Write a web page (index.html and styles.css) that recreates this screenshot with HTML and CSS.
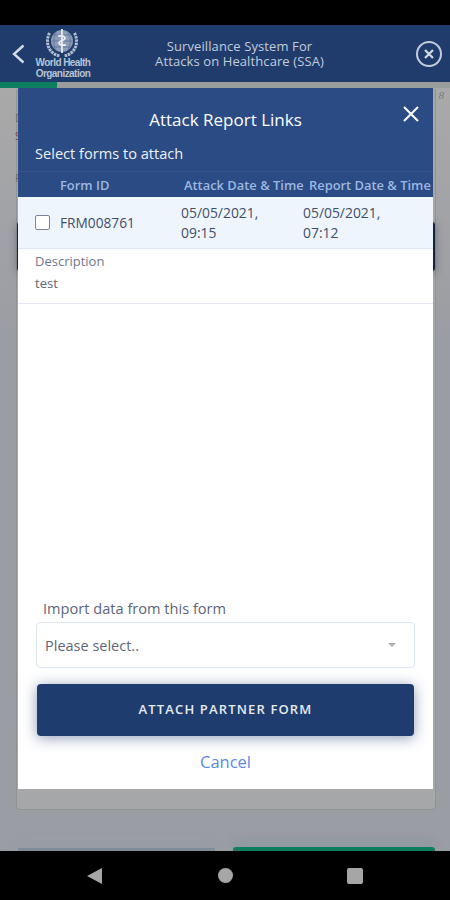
FILE: index.html
```html
<!DOCTYPE html>
<html>
<head>
<meta charset="utf-8">
<title>Attack Report Links</title>
<link rel="stylesheet" href="styles.css">
</head>
<body>
<div class="screen">

<div class="statusBar"></div>

<!-- APP BAR -->
<div class="appBar">
  <svg class="backIcon" width="14" height="22" viewBox="0 0 14 22"><path d="M12.5 2.5 L3 11 L12.5 19.5" fill="none" stroke="#d5dbe6" stroke-width="2.4"/></svg>
  <div class="logo">
    <svg width="34" height="29" viewBox="0 0 34 29">
      <circle cx="17" cy="13" r="11" fill="#8e9db6"/>
      <path d="M8 7 H26 M6.5 13 H27.5 M8 19 H26 M17 2 V24 M11 4 C8 10 8 17 11 22 M23 4 C26 10 26 17 23 22" stroke="#5a7299" stroke-width="0.8" fill="none"/>
      <path d="M17 1 V25 M13 8 C21 7 22 11 17 12.5 C12 14 13 18 21 17" stroke="#eef1f6" stroke-width="1.7" fill="none"/>
      <path d="M4.5 5 C-0.5 15 4 26 15 28 M29.5 5 C34.5 15 30 26 19 28" stroke="#b4bfd0" stroke-width="3" fill="none" stroke-dasharray="2.5 0.8"/>
    </svg>
    <div class="logoText">World Health<br>Organization</div>
  </div>
  <div class="appTitle">Surveillance System For<br>Attacks on Healthcare (SSA)</div>
  <svg class="closeIcon" width="28" height="28" viewBox="0 0 28 28"><circle cx="14" cy="14" r="12" fill="none" stroke="#c3ccdb" stroke-width="2"/><path d="M10 10 L18 18 M18 10 L10 18" stroke="#d5dbe6" stroke-width="2.2"/></svg>
</div>

<div class="progress"><div class="progressFill"></div></div>

<div class="content">

  <!-- form behind the dialog -->
  <div class="backdrop">
    <div class="pageNumber">8</div>
    <div class="backCard">
      <div class="backText">D</div>
      <div class="backText red">S</div>
      <div class="backText third">F</div>
      <div class="backButton"></div>
    </div>
    <div class="backFooter">
      <div class="footerLeft"></div>
      <div class="footerRight"></div>
    </div>
  </div>

  <!-- DIALOG -->
  <div class="dialog">
    <div class="dialogHead">
      <div class="dialogTitleRow">
        <div class="dialogTitle">Attack Report Links</div>
        <svg class="dialogClose" width="18" height="18" viewBox="0 0 18 18"><path d="M2 2 L16 16 M16 2 L2 16" stroke="#fff" stroke-width="2"/></svg>
      </div>
      <div class="dialogSub">Select forms to attach</div>
      <div class="tableHead">
        <div class="colId">Form ID</div>
        <div class="colAttack">Attack Date &amp; Time</div>
        <div class="colReport">Report Date &amp; Time</div>
      </div>
    </div>

    <div class="tableRow">
      <div class="checkBox"></div>
      <div class="rowId">FRM008761</div>
      <div class="rowAttack">05/05/2021,<br>09:15</div>
      <div class="rowReport">05/05/2021,<br>07:12</div>
    </div>
    <div class="descRow">
      <div class="descLabel">Description</div>
      <div class="descText">test</div>
    </div>

    <div class="spacer"></div>

    <div class="importLabel">Import data from this form</div>
    <div class="selectBox">
      <span>Please select..</span>
      <div class="caret"></div>
    </div>
    <div class="attachButton">ATTACH PARTNER FORM</div>
    <div class="cancel">Cancel</div>
  </div>
</div>

<!-- NAV BAR -->
<div class="navBar">
  <svg width="16" height="18" viewBox="0 0 16 18"><path d="M16 1 V17 L1 9 Z" fill="#a6a6a6"/></svg>
  <div class="navCircle"></div>
  <div class="navSquare"></div>
</div>

</div>
</body>
</html>
```

FILE: styles.css
```css
html, body
{
margin:0;
padding:0;
}

.screen
{
width:450px;
height:900px;
display:flex;
flex-direction:column;
overflow:hidden;
font-family:"Open Sans", "Noto Sans", sans-serif;
background:#000;
}

.statusBar
{
height:25px;
background:#000;
}

.appBar
{
height:57px;
background:#1f3c6c;
display:flex;
align-items:center;
position:relative;
}
.backIcon
{
margin-left:11px;
}
.logo
{
width:60px;
margin-left:8px;
display:flex;
flex-direction:column;
align-items:center;
}
.logo svg
{
margin-left:-3px;
}
.logoText
{
font-family:"Liberation Sans", sans-serif;
font-size:10px;
line-height:11px;
font-weight:bold;
letter-spacing:-0.55px;
color:#b8c2d2;
text-align:center;
white-space:nowrap;
}
.appTitle
{
flex:1;
font-size:13px;
line-height:15px;
color:#c3ccdb;
text-align:center;
letter-spacing:0.1px;
white-space:nowrap;
}
.closeIcon
{
margin:0 7px 0 29px;
}

.progress
{
height:6px;
background:#9c9c9c;
}
.progressFill
{
width:57px;
height:6px;
background:#0e7f5e;
}

.content
{
flex:1;
position:relative;
overflow:hidden;
}

/* form behind the dialog */
.backdrop
{
height:100%;
background:linear-gradient(#a9a9a9, #9b9da4 250px);
padding:0 14px 0 16px;
box-sizing:border-box;
display:flex;
flex-direction:column;
}
.pageNumber
{
height:0;
text-align:right;
margin-right:-8px;
padding-top:1px;
font-family:"Liberation Serif", serif;
font-style:italic;
font-size:11px;
color:#7d7d7d;
}
.backCard
{
height:721px;
box-sizing:border-box;
border:1px solid #929396;
border-top:none;
border-radius:0 0 4px 4px;
background:#a6a7a8;
padding-top:20px;
font-size:11px;
line-height:18px;
color:#6a6a6a;
}
.backText
{
margin-left:-2px;
}
.backText.red
{
color:#8a4545;
}
.backText.third
{
margin-top:24px;
}
.backButton
{
height:49px;
margin-top:35px;
background:#15223f;
border-radius:3px;
box-shadow:0 2px 10px rgba(21,34,63,0.35);
}
.backFooter
{
margin-top:auto;
display:flex;
gap:18px;
padding:0 1px 0 2px;
}
.footerLeft
{
width:197px;
height:3px;
margin-top:1px;
background:#7f8d99;
box-shadow:0 -4px 12px rgba(127,160,170,0.3);
}
.footerRight
{
flex:1;
height:4px;
background:#0e7f5e;
border-radius:3px 3px 0 0;
box-shadow:0 -5px 12px rgba(14,127,94,0.25);
}

/* dialog */
.dialog
{
position:absolute;
left:18px;
top:0;
width:415px;
height:701px;
background:#fff;
display:flex;
flex-direction:column;
}
.dialogHead
{
background:#2a4b84;
color:#fff;
}
.dialogTitleRow
{
height:54px;
box-sizing:border-box;
display:flex;
align-items:center;
justify-content:center;
position:relative;
}
.dialogTitle
{
font-size:17px;
margin-top:9px;
}
.dialogClose
{
position:absolute;
right:13px;
top:17px;
}
.dialogSub
{
height:29px;
padding-left:17px;
font-size:14.6px;
line-height:22px;
color:#eef1f6;
border-bottom:1px solid #315490;
}
.tableHead
{
height:25px;
display:flex;
align-items:center;
font-size:12.9px;
font-weight:600;
color:#9db7e0;
white-space:nowrap;
}
.colId
{
margin-left:42px;
width:124px;
}
.colAttack
{
width:125px;
}

.tableRow
{
height:52px;
background:#eef5fd;
border-bottom:1px solid #dfe6f2;
box-sizing:border-box;
display:flex;
align-items:center;
font-size:13.9px;
line-height:20px;
color:#3f4e69;
}
.checkBox
{
width:13px;
height:13px;
margin-left:17px;
border:1.5px solid #7b8399;
border-radius:2px;
background:#fff;
}
.rowId
{
width:121px;
margin-left:10px;
font-size:13.7px;
}
.rowAttack
{
width:122px;
}

.descRow
{
height:55px;
box-sizing:border-box;
padding:4px 17px 0;
border-bottom:1px solid #e4e7f1;
}
.descLabel
{
font-size:13px;
line-height:17px;
color:#70778a;
}
.descText
{
margin-top:5px;
font-size:13px;
line-height:17px;
color:#5c6478;
}

.spacer
{
flex:1;
}

.importLabel
{
margin-left:25px;
font-size:14.6px;
line-height:18px;
color:#5c6478;
}
.selectBox
{
height:46px;
box-sizing:border-box;
margin:5px 18px 0;
padding:0 18px 0 8px;
border:1px solid #dde5f4;
border-radius:4px;
display:flex;
align-items:center;
justify-content:space-between;
font-size:14.5px;
color:#5f6679;
}
.caret
{
width:0;
height:0;
border-left:4px solid transparent;
border-right:4px solid transparent;
border-top:4px solid #a9adb6;
}
.attachButton
{
height:52px;
box-sizing:border-box;
padding-bottom:2px;
margin:16px 19px 0;
background:#1f3c6e;
border-radius:4px;
box-shadow:0 2px 14px rgba(31,60,110,0.5);
display:flex;
align-items:center;
justify-content:center;
font-size:13px;
font-weight:600;
letter-spacing:1.15px;
color:#e6eaf1;
}
.cancel
{
margin-top:14px;
height:25px;
margin-bottom:14px;
text-align:center;
font-size:16.5px;
line-height:23px;
color:#5b8ae8;
}

.navBar
{
height:49px;
background:#000;
display:flex;
align-items:center;
padding:0 87px 0 86px;
justify-content:space-between;
}
.navCircle
{
width:15px;
height:15px;
margin-left:1px;
border-radius:50%;
background:#a6a6a6;
}
.navSquare
{
width:16px;
height:16px;
border-radius:2px;
background:#a6a6a6;
}
```
